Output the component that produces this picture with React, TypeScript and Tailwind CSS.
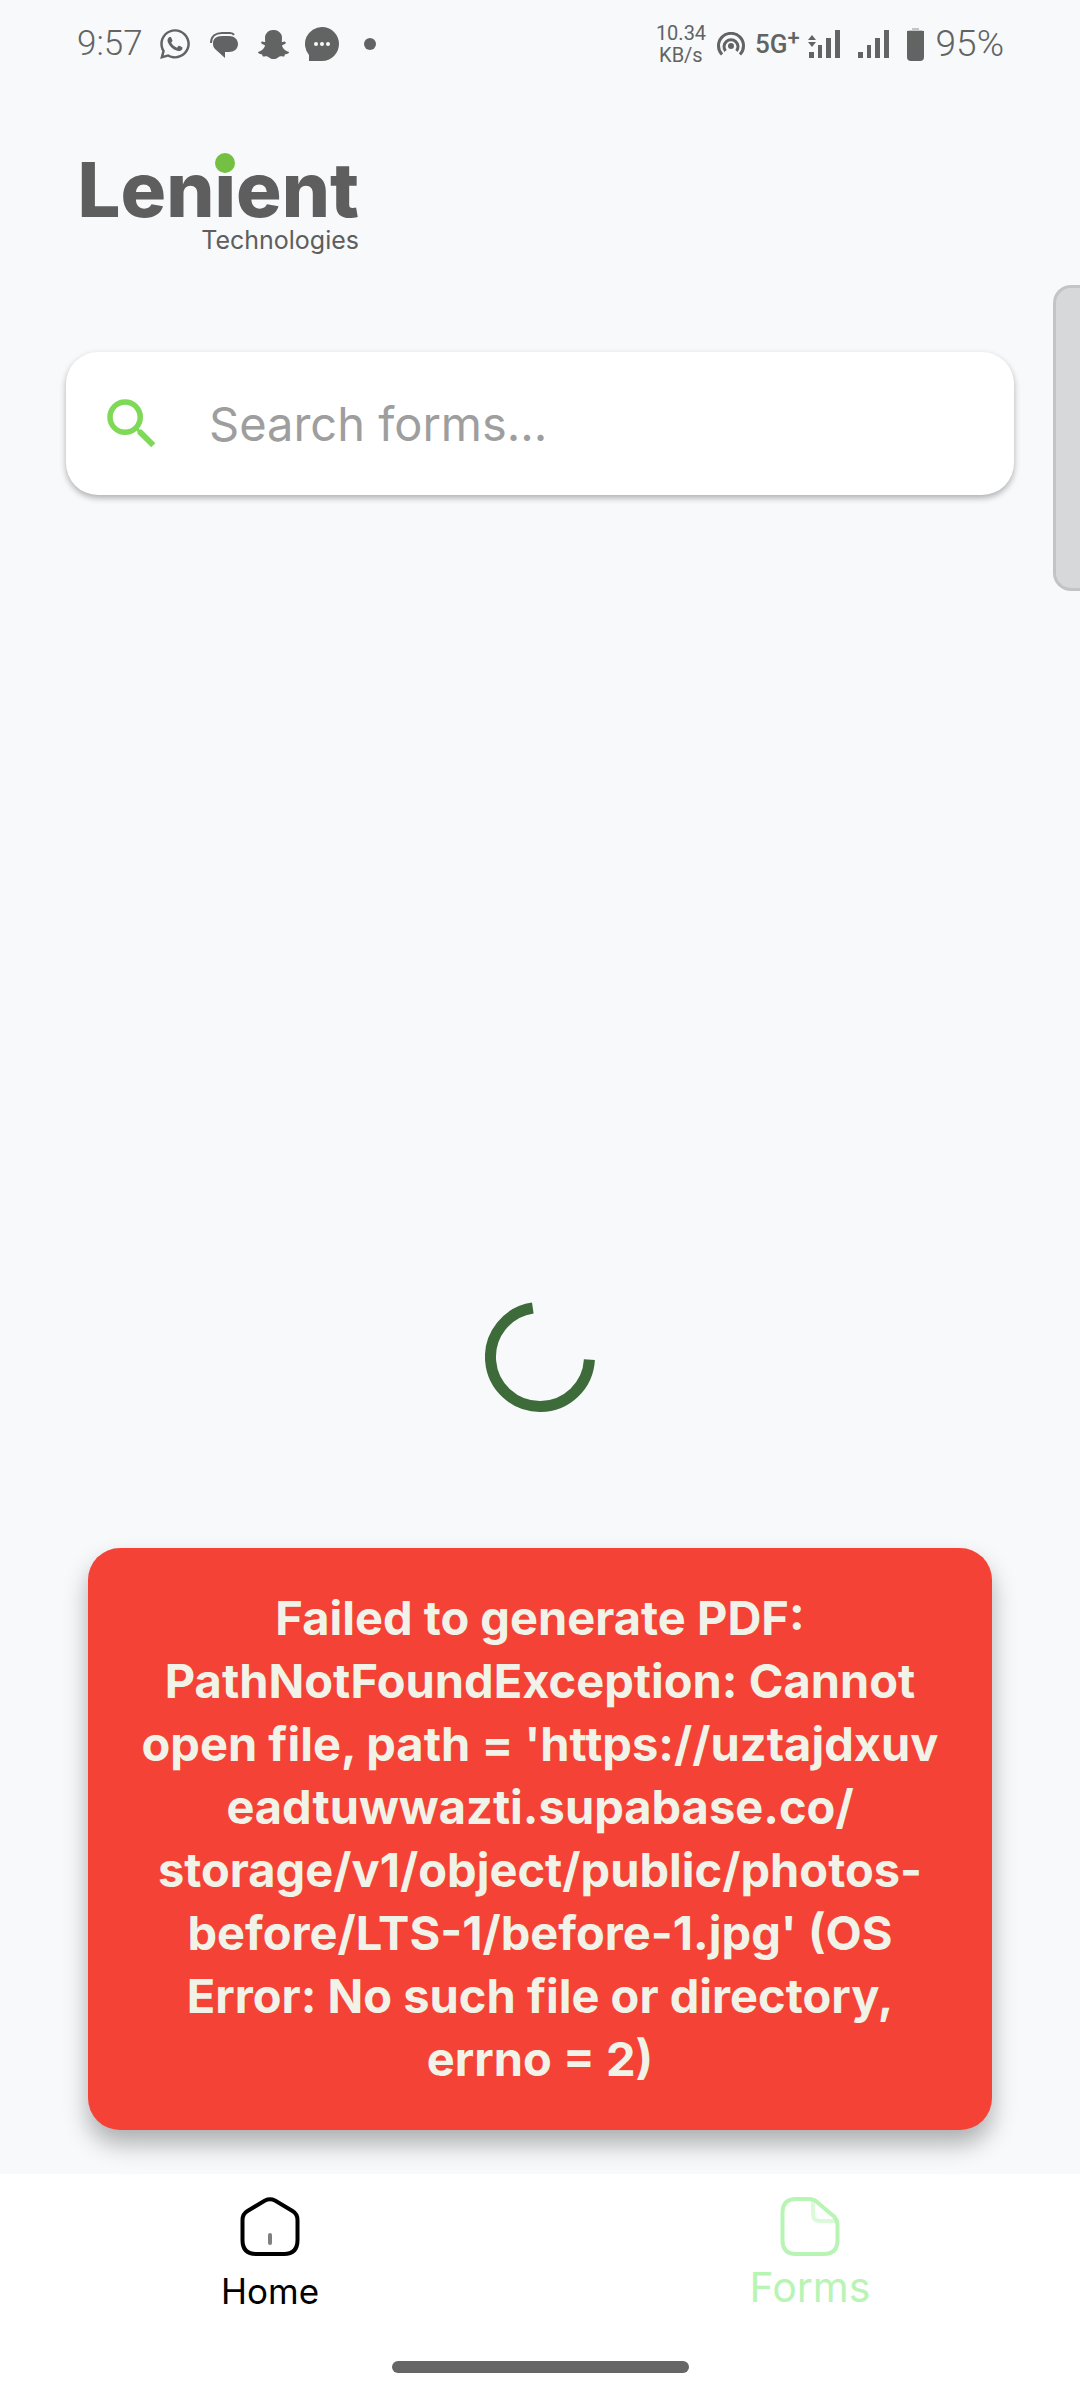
import React from "react";
import { FaSnapchatGhost } from "react-icons/fa";
import { FaWhatsapp } from "react-icons/fa6";
import { MdSearch } from "react-icons/md";

const errorLines = [
  "Failed to generate PDF:",
  "PathNotFoundException: Cannot",
  "open file, path = 'https://uztajdxuv",
  "eadtuwwazti.supabase.co/",
  "storage/v1/object/public/photos-",
  "before/LTS-1/before-1.jpg' (OS",
  "Error: No such file or directory,",
  "errno = 2)",
];

function StatusBar() {
  return (
    <div className="flex h-[88px] items-center justify-between pr-[76px] pl-[77px] font-[Roboto,sans-serif] text-[#626463]">
      <div className="flex items-center">
        <time className="w-[64px] text-[35px] leading-10 font-light">9:57</time>
        <FaWhatsapp className="ml-[17px] size-[34px]" aria-label="WhatsApp" />
        <svg className="ml-[18px] h-[27px] w-[28px]" viewBox="0 0 28 27" aria-label="Messages">
          <path d="M1 12 C1 5 6 2 12 2 H20 Q23 2 24 4" fill="none" stroke="currentColor" strokeWidth="2" />
          <path d="M12 5 H19 C24 5 28 8 28 13 C28 18 24 21 19 21 H15 V27 L5 18 C3 16 3 14 3 12 C3 8 6 5 12 5 Z" fill="currentColor" />
        </svg>
        <FaSnapchatGhost className="ml-[20px] size-[31px]" aria-label="Snapchat" />
        <svg className="ml-[16px] size-[34px]" viewBox="0 0 34 34" aria-label="Chat">
          <path d="M17 0 A17 17 0 1 1 17 34 H4 V28 A17 17 0 0 1 17 0 Z" fill="currentColor" />
          <g fill="#f8f9fb">
            <circle cx="11" cy="17" r="2" />
            <circle cx="17" cy="17" r="2" />
            <circle cx="23" cy="17" r="2" />
          </g>
        </svg>
        <span className="ml-[25px] size-3 rounded-full bg-current" />
      </div>
      <div className="flex items-center">
        <p className="w-[50px] text-center text-[20px] leading-[22px]">
          10.34
          <br />
          KB/s
        </p>
        <svg className="ml-[11px] h-[24px] w-[28px]" viewBox="0 0 28 24" fill="none" stroke="currentColor" strokeWidth="3" aria-label="Hotspot">
          <path d="M5 22.500 A12.500 12.500 0 1 1 23 22.500" />
          <path d="M8.500 19 A7 7 0 1 1 19.500 19" />
          <circle cx="14" cy="14" r="3" fill="currentColor" stroke="none" />
        </svg>
        <div className="ml-[10px] flex items-start leading-7 font-medium">
          <span className="text-[26px]">5G</span>
          <span className="text-[22px] leading-4">+</span>
        </div>
        <svg className="ml-[8px] h-[28px] w-[32px]" viewBox="0 0 32 28" fill="currentColor" aria-label="Mobile signal 1">
          <path d="M0 10 L4 5 L8 10 Z M0 12 H8 L4 17 Z" />
          <path d="M1 22 H6 V28 H1 Z M10 15 H14 V28 H10 Z M18 8 H23 V28 H18 Z M27 0 H32 V28 H27 Z" />
        </svg>
        <svg className="ml-[18px] h-[28px] w-[31px]" viewBox="0 0 31 28" fill="currentColor" aria-label="Mobile signal 2">
          <path d="M0 22 H5 V28 H0 Z M9 15 H13 V28 H9 Z M17 8 H22 V28 H17 Z M26 0 H31 V28 H26 Z" />
        </svg>
        <svg className="ml-[18px] h-[33px] w-[17px]" viewBox="0 0 17 33" fill="currentColor" aria-label="Battery">
          <path d="M1 3 Q1 2 3 2 H5 V0 H12 V2 H14 Q16 2 16 3 Z" opacity=".35" />
          <path d="M0 3 H17 V29 Q17 33 13 33 H4 Q0 33 0 29 Z" />
        </svg>
        <span className="ml-[12px] text-[37px] leading-10 font-light">95%</span>
      </div>
    </div>
  );
}

function Logo() {
  return (
    <div className="flex w-[279px] flex-col items-end text-[#5e5e5e]">
      <p className="text-[76px] leading-[76px] font-extrabold">
        Len
        <span className="relative">
          i
          <span className="absolute top-[10px] left-1/2 size-[20px] -translate-x-1/2 rounded-full bg-[#74c043]" />
        </span>
        ent
      </p>
      <p className="text-[25px] leading-[26px]">Technologies</p>
    </div>
  );
}

function HomeIcon() {
  return (
    <svg className="size-[60px]" viewBox="0 0 60 60" fill="none" stroke="currentColor" strokeWidth="4" strokeLinecap="round">
      <path d="M2.500 24 Q2.500 18 7.500 15 L25 4.500 Q30 2 35 4.500 L52.500 15 Q57.500 18 57.500 24 V44 Q57.500 58 44 58 H16 Q2.500 58 2.500 44 Z" />
      <path d="M30 39 V47" stroke="#808080" />
    </svg>
  );
}

function FormIcon() {
  return (
    <svg className="size-[60px]" viewBox="0 0 60 60" fill="none" stroke="currentColor" strokeWidth="4">
      <path d="M33 5 V18 Q33 25 40 25 H56" opacity=".5" />
      <path d="M16 3 H29 Q34 3 37 6 L54 20.500 Q57.500 24 57.500 29 V44 Q57.500 58 44 58 H16 Q2.500 58 2.500 44 V17 Q2.500 3 16 3 Z" />
    </svg>
  );
}

export default function App() {
  return (
    <div className="relative flex min-h-screen flex-col bg-[#f8f9fb] font-[Inter,sans-serif]">
      <StatusBar />
      <header className="px-20 pt-[63px]">
        <Logo />
      </header>

      <label className="mx-[66px] mt-[99px] flex h-[143px] items-center rounded-[32px] bg-white pr-8 pl-[33px] shadow-[0_3px_6px_rgba(0,0,0,0.3)]">
        <MdSearch className="size-[66px] shrink-0 text-[#7ed957]" aria-hidden="true" />
        <input
          type="text"
          aria-label="Search forms"
          placeholder="Search forms..."
          className="ml-[44px] min-w-0 flex-1 bg-transparent text-[47px] leading-[60px] text-gray-800 outline-none placeholder:text-[#9e9e9e]"
        />
      </label>

      <main className="relative mt-[44px] flex flex-1 items-center justify-center">
        <svg className="size-[110px]" viewBox="0 0 110 110" fill="none" role="status" aria-label="Loading">
          <path d="M104.400 57.600 A49.500 49.500 0 1 1 47.800 6" stroke="#3d6b3a" strokeWidth="11" />
        </svg>
        <div role="alert" className="absolute inset-x-[88px] bottom-[44px] rounded-[32px] bg-[#f44336] px-8 pt-[38px] pb-[40px] text-center text-[47px] leading-[63px] font-bold whitespace-nowrap text-[#f1f3e9] shadow-[0_14px_24px_rgba(0,0,0,0.3)]">
          {errorLines.map((line) => (
            <span key={line} className="block">
              {line}
            </span>
          ))}
        </div>
      </main>

      <nav className="relative bg-white">
        <div className="grid h-[168px] grid-cols-2">
          <a href="#home" className="flex flex-col items-center pt-[22px] text-black">
            <HomeIcon />
            <span className="mt-[12px] text-[35px] leading-[46px]">Home</span>
          </a>
          <a href="#forms" className="flex flex-col items-center pt-[22px] text-[#b8f5b5]">
            <FormIcon />
            <span className="mt-[8px] text-[41px] leading-[46px]">Forms</span>
          </a>
        </div>
        <div className="flex h-[58px] justify-center pt-[19px]">
          <span className="h-[12px] w-[297px] rounded-full bg-[#666666]" />
        </div>
      </nav>

      <div className="absolute top-[285px] right-0 h-[306px] w-[27px] rounded-l-[18px] border-3 border-r-0 border-[#c2c4c6] bg-[#d7d8da]" />
    </div>
  );
}
